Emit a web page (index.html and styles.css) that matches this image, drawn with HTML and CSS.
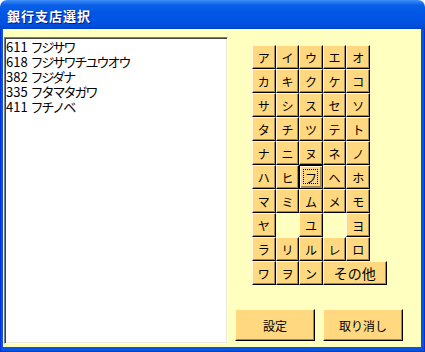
FILE: index.html
```
<!DOCTYPE html>
<html lang="ja">
<head>
    <meta charset="UTF-8">
    <title>銀行支店選択</title>
    <link rel="stylesheet" href="styles.css">
</head>
<body>
    <div class="window">
        <div class="titlebar">
            <span class="title">銀行支店選択</span>
        </div>
        <div class="frame">
            <div class="client">
                <div class="listbox">
                    <div class="item"><span class="code">611</span> <span class="name">フジサワ</span></div>
                    <div class="item"><span class="code">618</span> <span class="name">フジサワチユウオウ</span></div>
                    <div class="item"><span class="code">382</span> <span class="name">フジダナ</span></div>
                    <div class="item"><span class="code">335</span> <span class="name">フタマタガワ</span></div>
                    <div class="item"><span class="code">411</span> <span class="name">フチノベ</span></div>
                </div>

                <div class="side">
                    <div class="kana-grid">
                        <button class="key">ア</button>
                        <button class="key">イ</button>
                        <button class="key">ウ</button>
                        <button class="key">エ</button>
                        <button class="key">オ</button>

                        <button class="key">カ</button>
                        <button class="key">キ</button>
                        <button class="key">ク</button>
                        <button class="key">ケ</button>
                        <button class="key">コ</button>

                        <button class="key">サ</button>
                        <button class="key">シ</button>
                        <button class="key">ス</button>
                        <button class="key">セ</button>
                        <button class="key">ソ</button>

                        <button class="key">タ</button>
                        <button class="key">チ</button>
                        <button class="key">ツ</button>
                        <button class="key">テ</button>
                        <button class="key">ト</button>

                        <button class="key">ナ</button>
                        <button class="key">ニ</button>
                        <button class="key">ヌ</button>
                        <button class="key">ネ</button>
                        <button class="key">ノ</button>

                        <button class="key">ハ</button>
                        <button class="key">ヒ</button>
                        <button class="key focused">フ</button>
                        <button class="key">ヘ</button>
                        <button class="key">ホ</button>

                        <button class="key">マ</button>
                        <button class="key">ミ</button>
                        <button class="key">ム</button>
                        <button class="key">メ</button>
                        <button class="key">モ</button>

                        <button class="key">ヤ</button>
                        <span class="blank"></span>
                        <button class="key">ユ</button>
                        <span class="blank"></span>
                        <button class="key">ヨ</button>

                        <button class="key">ラ</button>
                        <button class="key">リ</button>
                        <button class="key">ル</button>
                        <button class="key">レ</button>
                        <button class="key">ロ</button>

                        <button class="key">ワ</button>
                        <button class="key">ヲ</button>
                        <button class="key">ン</button>
                        <button class="key other">その他</button>
                    </div>

                    <div class="actions">
                        <button class="cmd">設定</button>
                        <button class="cmd">取り消し</button>
                    </div>
                </div>
            </div>
        </div>
    </div>
</body>
</html>
```

FILE: styles.css
```
body {
    margin: 0;
    background: #fff;
    font-family: "Noto Sans CJK JP", sans-serif;
}
.window {
    width: 425px;
    height: 352px;
    display: flex;
    flex-direction: column;
    border-radius: 7px 7px 0 0;
    overflow: hidden;
}
.titlebar {
    height: 29px;
    flex-shrink: 0;
    display: flex;
    align-items: center;
    padding: 1px 0 0 7px;
    box-sizing: border-box;
    background: linear-gradient(#3d8ef8 0, #2b7cf3 2px, #0a5fe6 5px, #0058e4 12px, #0054e3 20px, #004fdc 26px, #0043c4 29px);
}
.title {
    color: #fff;
    font-size: 13px;
    font-weight: bold;
    letter-spacing: 1px;
    text-shadow: 1px 1px 0 #0a1883;
}
.frame {
    flex: 1;
    display: flex;
    padding: 0 4px 5px 3px;
    background: #0855dd;
    box-shadow: inset 1px 0 #0831d9, inset -1px 0 #0831d9, inset 0 -1px #0831d9;
    min-height: 0;
}
.client {
    flex: 1;
    display: flex;
    background: #ffffc0;
}
.listbox {
    width: 224px;
    height: 307px;
    margin: 8px 0 0 1px;
    box-sizing: border-box;
    padding: 1px 0 0 0;
    background: #fff;
    border: 1px solid;
    border-color: #808080 #fff #fff #808080;
    box-shadow: inset 1px 1px #404040, inset -1px -1px #ece9d8;
    font-size: 13px;
    line-height: 15px;
    color: #000;
}
.item {
    height: 15px;
    padding-left: 1px;
    white-space: nowrap;
}
.name {
    letter-spacing: -2px;
}
.side {
    flex: 1;
    display: flex;
    flex-direction: column;
}
.kana-grid {
    display: grid;
    grid-template-columns: repeat(5, 23.6px);
    grid-template-rows: repeat(10, 24px);
    margin: 16px 0 0 24px;
}
.key,
.cmd {
    font-family: inherit;
    color: #000;
    background: #ffd880;
    border: 1px solid;
    border-color: #fff6dc #000 #000 #fff6dc;
    box-shadow: inset -1px -1px #a08a52;
    padding: 0;
    margin: 0;
    position: relative;
}
.key {
    font-size: 12px;
    width: 100%;
    height: 100%;
}
.key.other {
    width: 64px;
    font-size: 14px;
    grid-column: 4 / span 2;
}
.key.focused {
    border: 1px solid #000;
    box-shadow: inset 1px 1px #fff6dc, inset -2px -2px #a08a52;
}
.key.focused::after {
    content: "";
    position: absolute;
    left: 3px;
    top: 3px;
    right: 4px;
    bottom: 4px;
    border: 1px dotted #000;
}
.actions {
    display: flex;
    gap: 8px;
    margin: 24px 0 0 7px;
}
.cmd {
    width: 80px;
    height: 32px;
    font-size: 12px;
}
```
